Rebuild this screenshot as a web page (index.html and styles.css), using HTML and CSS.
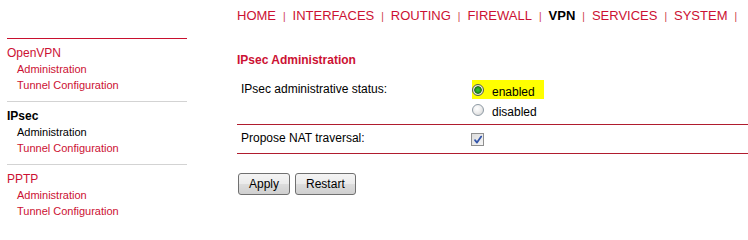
FILE: index.html
```html
<!DOCTYPE html>
<html lang="en">
<head>
<meta charset="utf-8">
<title>IPsec Administration</title>
<link rel="stylesheet" href="styles.css">
</head>
<body>
<div class="page">
  <aside class="sidebar">
    <div class="group first">
      <a class="group-title" href="#">OpenVPN</a>
      <a class="sub" href="#">Administration</a>
      <a class="sub" href="#">Tunnel Configuration</a>
    </div>
    <div class="group">
      <a class="group-title active" href="#">IPsec</a>
      <a class="sub active" href="#">Administration</a>
      <a class="sub" href="#">Tunnel Configuration</a>
    </div>
    <div class="group">
      <a class="group-title" href="#">PPTP</a>
      <a class="sub" href="#">Administration</a>
      <a class="sub" href="#">Tunnel Configuration</a>
    </div>
  </aside>
  <main class="main">
    <nav class="topnav">
      <a href="#">HOME</a><span class="sep">|</span><a href="#">INTERFACES</a><span class="sep">|</span><a href="#">ROUTING</a><span class="sep">|</span><a href="#">FIREWALL</a><span class="sep">|</span><a class="current" href="#">VPN</a><span class="sep">|</span><a href="#">SERVICES</a><span class="sep">|</span><a href="#">SYSTEM</a><span class="sep">|</span>
    </nav>
    <h2 class="title">IPsec Administration</h2>
    <div class="form">
      <div class="row row-status">
        <div class="label">IPsec administrative status:</div>
        <div class="field radios">
          <div class="option"><span class="highlight"><span class="radio checked"></span>enabled</span></div>
          <div class="option"><span class="radio"></span>disabled</div>
        </div>
      </div>
      <div class="row row-nat">
        <div class="label nat-label">Propose NAT traversal:</div>
        <div class="field check-field">
          <span class="checkbox"><svg width="10" height="10" viewBox="0 0 10 10"><path d="M2 5.2 L4 7.6 L8.2 1.6" fill="none" stroke="#3355aa" stroke-width="1.8" stroke-linecap="round" stroke-linejoin="round"/></svg></span>
        </div>
      </div>
    </div>
    <div class="buttons">
      <button class="btn" type="button">Apply</button>
      <button class="btn" type="button">Restart</button>
    </div>
  </main>
</div>
</body>
</html>
```
FILE: styles.css
```css
html, body {
  margin: 0;
  padding: 0;
  background: #ffffff;
}
body {
  font-family: "Liberation Sans", Arial, sans-serif;
  font-size: 12px;
  color: #000000;
}
a {
  text-decoration: none;
}
.page {
  display: flex;
  align-items: flex-start;
}
.sidebar {
  width: 180px;
  margin-left: 7px;
  margin-top: 38px;
  flex: none;
}
.group {
  border-top: 1px solid #d3d3d3;
  padding: 6px 0 8px 0;
  display: flex;
  flex-direction: column;
  line-height: 16px;
}
.group.first {
  border-top-color: #c8102e;
}
.group-title {
  font-size: 12px;
  color: #cc1133;
}
.group-title.active {
  color: #000000;
  font-weight: bold;
}
.sub {
  font-size: 11px;
  padding-left: 10px;
  color: #cc1133;
}
.sub.active {
  color: #000000;
}
.main {
  flex: 1;
  margin-left: 50px;
  min-width: 0;
}
.topnav {
  margin-top: 8px;
  font-size: 13px;
  line-height: 16px;
  white-space: nowrap;
}
.topnav a {
  color: #cc1133;
}
.topnav a.current {
  color: #000000;
  font-weight: bold;
}
.sep {
  font-size: 10px;
  color: #cc3344;
  margin: 0 7px;
}
.title {
  margin: 28px 0 0 0;
  font-size: 12px;
  line-height: 14px;
  font-weight: bold;
  color: #cc1133;
}
.form {
  margin-top: 11px;
}
.row {
  display: flex;
  border-bottom: 1px solid #b01c2e;
}
.label {
  width: 224px;
  padding: 4px 4px 0 4px;
  line-height: 14px;
  flex: none;
}
.nat-label {
  padding-top: 6px;
}
.field {
  flex: 1;
}
.radios {
  padding: 6px 0 6px 3px;
}
.option {
  line-height: 14px;
  height: 14px;
}
.option + .option {
  margin-top: 6px;
}
.highlight {
  background: #ffff00;
  padding: 5px 9px 0 0;
}
.radio {
  display: inline-block;
  width: 10px;
  height: 10px;
  border: 1px solid #8e9aa4;
  border-radius: 50%;
  background: radial-gradient(circle at 40% 35%, #ffffff 0%, #eeeeee 45%, #cfcfcf 100%);
  margin-right: 8px;
  vertical-align: baseline;
  position: relative;
}
.radio.checked {
  border-color: #55604a;
  background: radial-gradient(circle at 50% 50%, #3cc43c 0%, #1f9a1f 35%, #1a5a1a 48%, #e8eed8 58%, #c9cfb8 100%);
}
.check-field {
  padding: 8px 0 7px 2px;
}
.checkbox {
  display: block;
  width: 11px;
  height: 11px;
  border: 1px solid #8f8f8f;
  background: linear-gradient(135deg, #dcdcdc 0%, #f6f6f6 100%);
  position: relative;
}
.checkbox svg {
  display: block;
  margin: 1px 0 0 1px;
}
.buttons {
  margin-top: 19px;
  margin-left: 1px;
  display: flex;
  gap: 5px;
}
.btn {
  font-family: "Liberation Sans", Arial, sans-serif;
  font-size: 12px;
  height: 22px;
  padding: 0 10px;
  border: 1px solid #707070;
  border-radius: 3px;
  background: linear-gradient(to bottom, #f4f4f4 0%, #ebebeb 50%, #dddddd 51%, #cfcfcf 100%);
  color: #000000;
  line-height: 20px;
}
```
